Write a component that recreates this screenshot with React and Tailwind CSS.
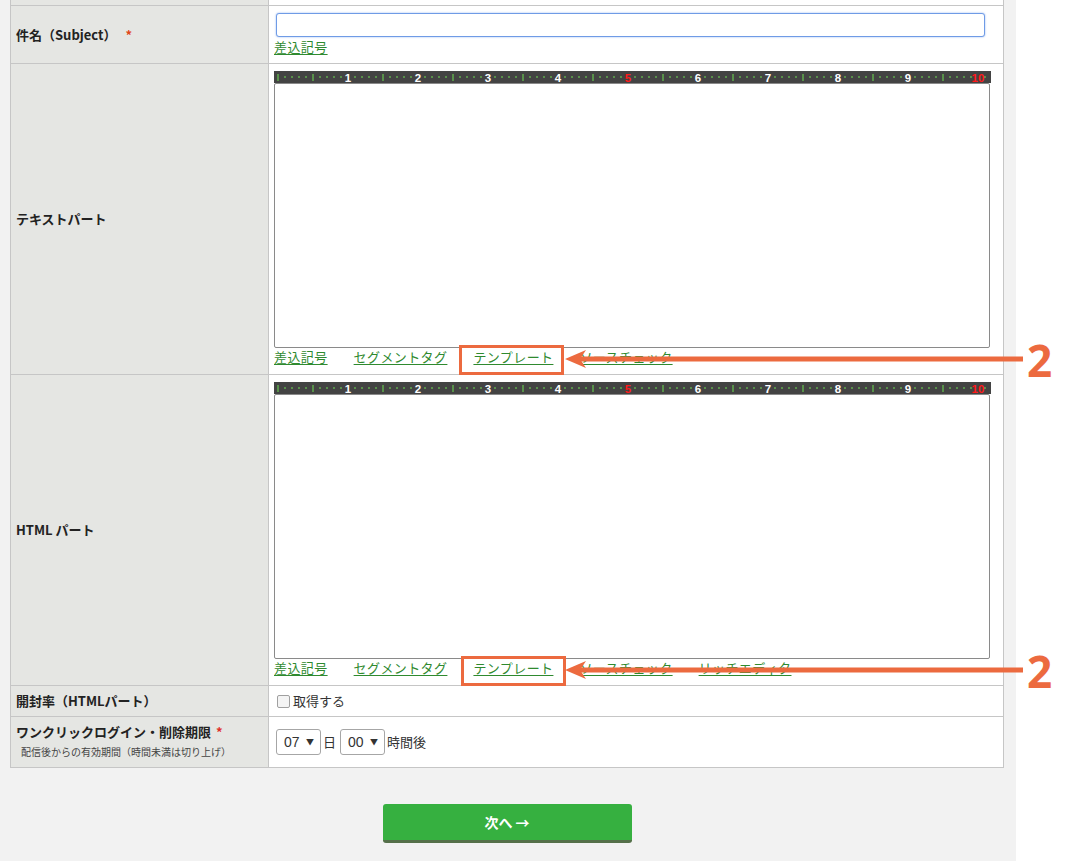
import React from "react";

const FONT = { fontFamily: '"Noto Sans CJK JP", "Noto Sans", sans-serif' };

function Ruler() {
  const ticks = [];
  for (let k = 0; k <= 101; k++) {
    const x = 4 + 7 * k;
    if (k > 0 && k % 10 === 0) {
      const red = k === 50 || k === 100;
      ticks.push(
        <text
          key={k}
          x={x}
          y={10.5}
          textAnchor="middle"
          fontSize="11.5"
          fontWeight="bold"
          fontFamily="Liberation Sans, Arial, sans-serif"
          fill={red ? "#ff1a1a" : "#ffffff"}
        >
          {k / 10}
        </text>
      );
    } else if (k % 5 === 0) {
      ticks.push(<rect key={k} x={x - 0.5} y={3} width={1} height={7} fill="#6ee052" />);
    } else {
      ticks.push(<rect key={k} x={x - 0.5} y={5} width={1} height={2} fill="#6ee052" />);
    }
  }
  return (
    <svg width="717" height="12" className="block" style={{ background: "#434343" }}>
      {ticks}
    </svg>
  );
}

function Link({ children }) {
  return (
    <span className="text-[#2f8a2f] underline underline-offset-2 decoration-[1px] tracking-[0.4px]">{children}</span>
  );
}

function Label({ children }) {
  return (
    <div className="bg-[#e5e6e3] border-r border-[#c6c6c6] pl-[5px] flex items-center text-[13px] font-bold text-[#222]">
      {children}
    </div>
  );
}

function EditorCell({ links }) {
  return (
    <div className="pl-[5px] pt-[7px] pb-[8px] bg-white">
      <Ruler />
      <div className="w-[716px] h-[265px] border border-[#8a8a8a] rounded-[2px] bg-white" />
      <div className="flex gap-[26px] h-[18px] items-center text-[13px] leading-[18px]">
        {links.map((l) => (
          <Link key={l}>{l}</Link>
        ))}
      </div>
    </div>
  );
}

function Arrow({ y }) {
  return (
    <svg className="absolute left-0 top-0" width="1083" height="861" style={{ pointerEvents: "none" }}>
      <rect x="580" y={y - 2.5} width="443" height="5" fill="#ec6a3f" />
      <path d={`M565 ${y} L586 ${y - 9} L580 ${y} L586 ${y + 9} Z`} fill="#ec6a3f" />
    </svg>
  );
}

export default function App() {
  return (
    <div className="relative w-[1083px] h-[861px] overflow-hidden bg-white" style={FONT}>
      <div className="flex">
        <div className="w-[1016px] min-h-[861px] bg-[#f2f2f2] pl-[10px] pr-[12px]">
          <div className="border-l border-r border-[#c6c6c6]">
            {/* partial top row */}
            <div className="grid grid-cols-[258px_1fr] h-[6px] border-b border-[#c6c6c6]">
              <div className="bg-[#e5e6e3] border-r border-[#c6c6c6]" />
              <div className="bg-white" />
            </div>
            {/* subject */}
            <div className="grid grid-cols-[258px_1fr] h-[58px] border-b border-[#c6c6c6]">
              <Label>
                <span>件名（Subject）</span>
                <span className="text-[#e0461c] ml-[9px]">*</span>
              </Label>
              <div className="bg-white pl-[5px] pt-[7px]">
                <div className="ml-[2px] w-[709px] h-[24px] border border-[#6f9be6] rounded-[3px] bg-white shadow-[0_0_2px_#8fb2ee]" />
                <div className="h-[20px] flex items-center text-[13px]">
                  <Link>差込記号</Link>
                </div>
              </div>
            </div>
            {/* text part */}
            <div className="grid grid-cols-[258px_1fr] h-[311px] border-b border-[#c6c6c6]">
              <Label>
                <span>テキストパート</span>
              </Label>
              <EditorCell links={["差込記号", "セグメントタグ", "テンプレート", "ソースチェック"]} />
            </div>
            {/* html part */}
            <div className="grid grid-cols-[258px_1fr] h-[311px] border-b border-[#c6c6c6]">
              <Label>
                <span>HTML パート</span>
              </Label>
              <EditorCell links={["差込記号", "セグメントタグ", "テンプレート", "ソースチェック", "リッチエディタ"]} />
            </div>
            {/* open rate */}
            <div className="grid grid-cols-[258px_1fr] h-[31px] border-b border-[#c6c6c6]">
              <Label>
                <span>開封率（HTMLパート）</span>
              </Label>
              <div className="bg-white pl-[8px] flex items-center text-[13px] text-[#333]">
                <span className="inline-block w-[13px] h-[13px] border border-[#a0a0a0] rounded-[2px] bg-[#f4f4f4] mr-[3px]" />
                <span>取得する</span>
              </div>
            </div>
            {/* one click */}
            <div className="grid grid-cols-[258px_1fr] h-[51px] border-b border-[#c6c6c6]">
              <div className="bg-[#e5e6e3] border-r border-[#c6c6c6] pl-[5px] pt-[5px]">
                <div className="text-[13px] font-bold text-[#222] leading-[20px]">
                  ワンクリックログイン・削除期限<span className="text-[#e0302a] ml-[5px]">*</span>
                </div>
                <div className="text-[10px] text-[#444] pl-[5px] leading-[16px] mt-[2px]">
                  配信後からの有効期間（時間未満は切り上げ）
                </div>
              </div>
              <div className="bg-white pl-[7px] flex items-center text-[13px] text-[#333]">
                <div className="w-[45px] h-[26px] border border-[#a6a6a6] rounded-[3px] flex items-center justify-between pl-[7px] pr-[6px]">
                  <span className="text-[14px]" style={{ fontFamily: '"Liberation Sans", Arial, sans-serif' }}>07</span>
                  <span className="text-[8px]">▼</span>
                </div>
                <span className="ml-[2px] mr-[4px]">日</span>
                <div className="w-[45px] h-[26px] border border-[#a6a6a6] rounded-[3px] flex items-center justify-between pl-[7px] pr-[6px]">
                  <span className="text-[14px]" style={{ fontFamily: '"Liberation Sans", Arial, sans-serif' }}>00</span>
                  <span className="text-[8px]">▼</span>
                </div>
                <span className="ml-[2px]">時間後</span>
              </div>
            </div>
          </div>
          <div className="flex justify-center pt-[36px]">
            <div className="w-[249px] h-[39px] bg-[#36b040] border-b-[3px] border-[#55704a] rounded-[3px] flex items-center justify-center text-white font-bold text-[14px]">
              次へ →
            </div>
          </div>
        </div>
        <div className="flex-1 bg-white" />
      </div>

      {/* annotations */}
      <div className="absolute left-[459px] top-[345px] w-[105px] h-[30px] border-[3px] border-[#ec6a3f]" />
      <div className="absolute left-[461px] top-[656px] w-[105px] h-[30px] border-[3px] border-[#ec6a3f]" />
      <Arrow y={359} />
      <Arrow y={670} />
      <div
        className="absolute left-[1027px] top-[334px] text-[44px] font-bold text-[#ec6a3f] leading-[52px]"
        style={{ fontFamily: '"Open Sans", sans-serif' }}
      >
        2
      </div>
      <div
        className="absolute left-[1027px] top-[645px] text-[44px] font-bold text-[#ec6a3f] leading-[52px]"
        style={{ fontFamily: '"Open Sans", sans-serif' }}
      >
        2
      </div>
    </div>
  );
}
